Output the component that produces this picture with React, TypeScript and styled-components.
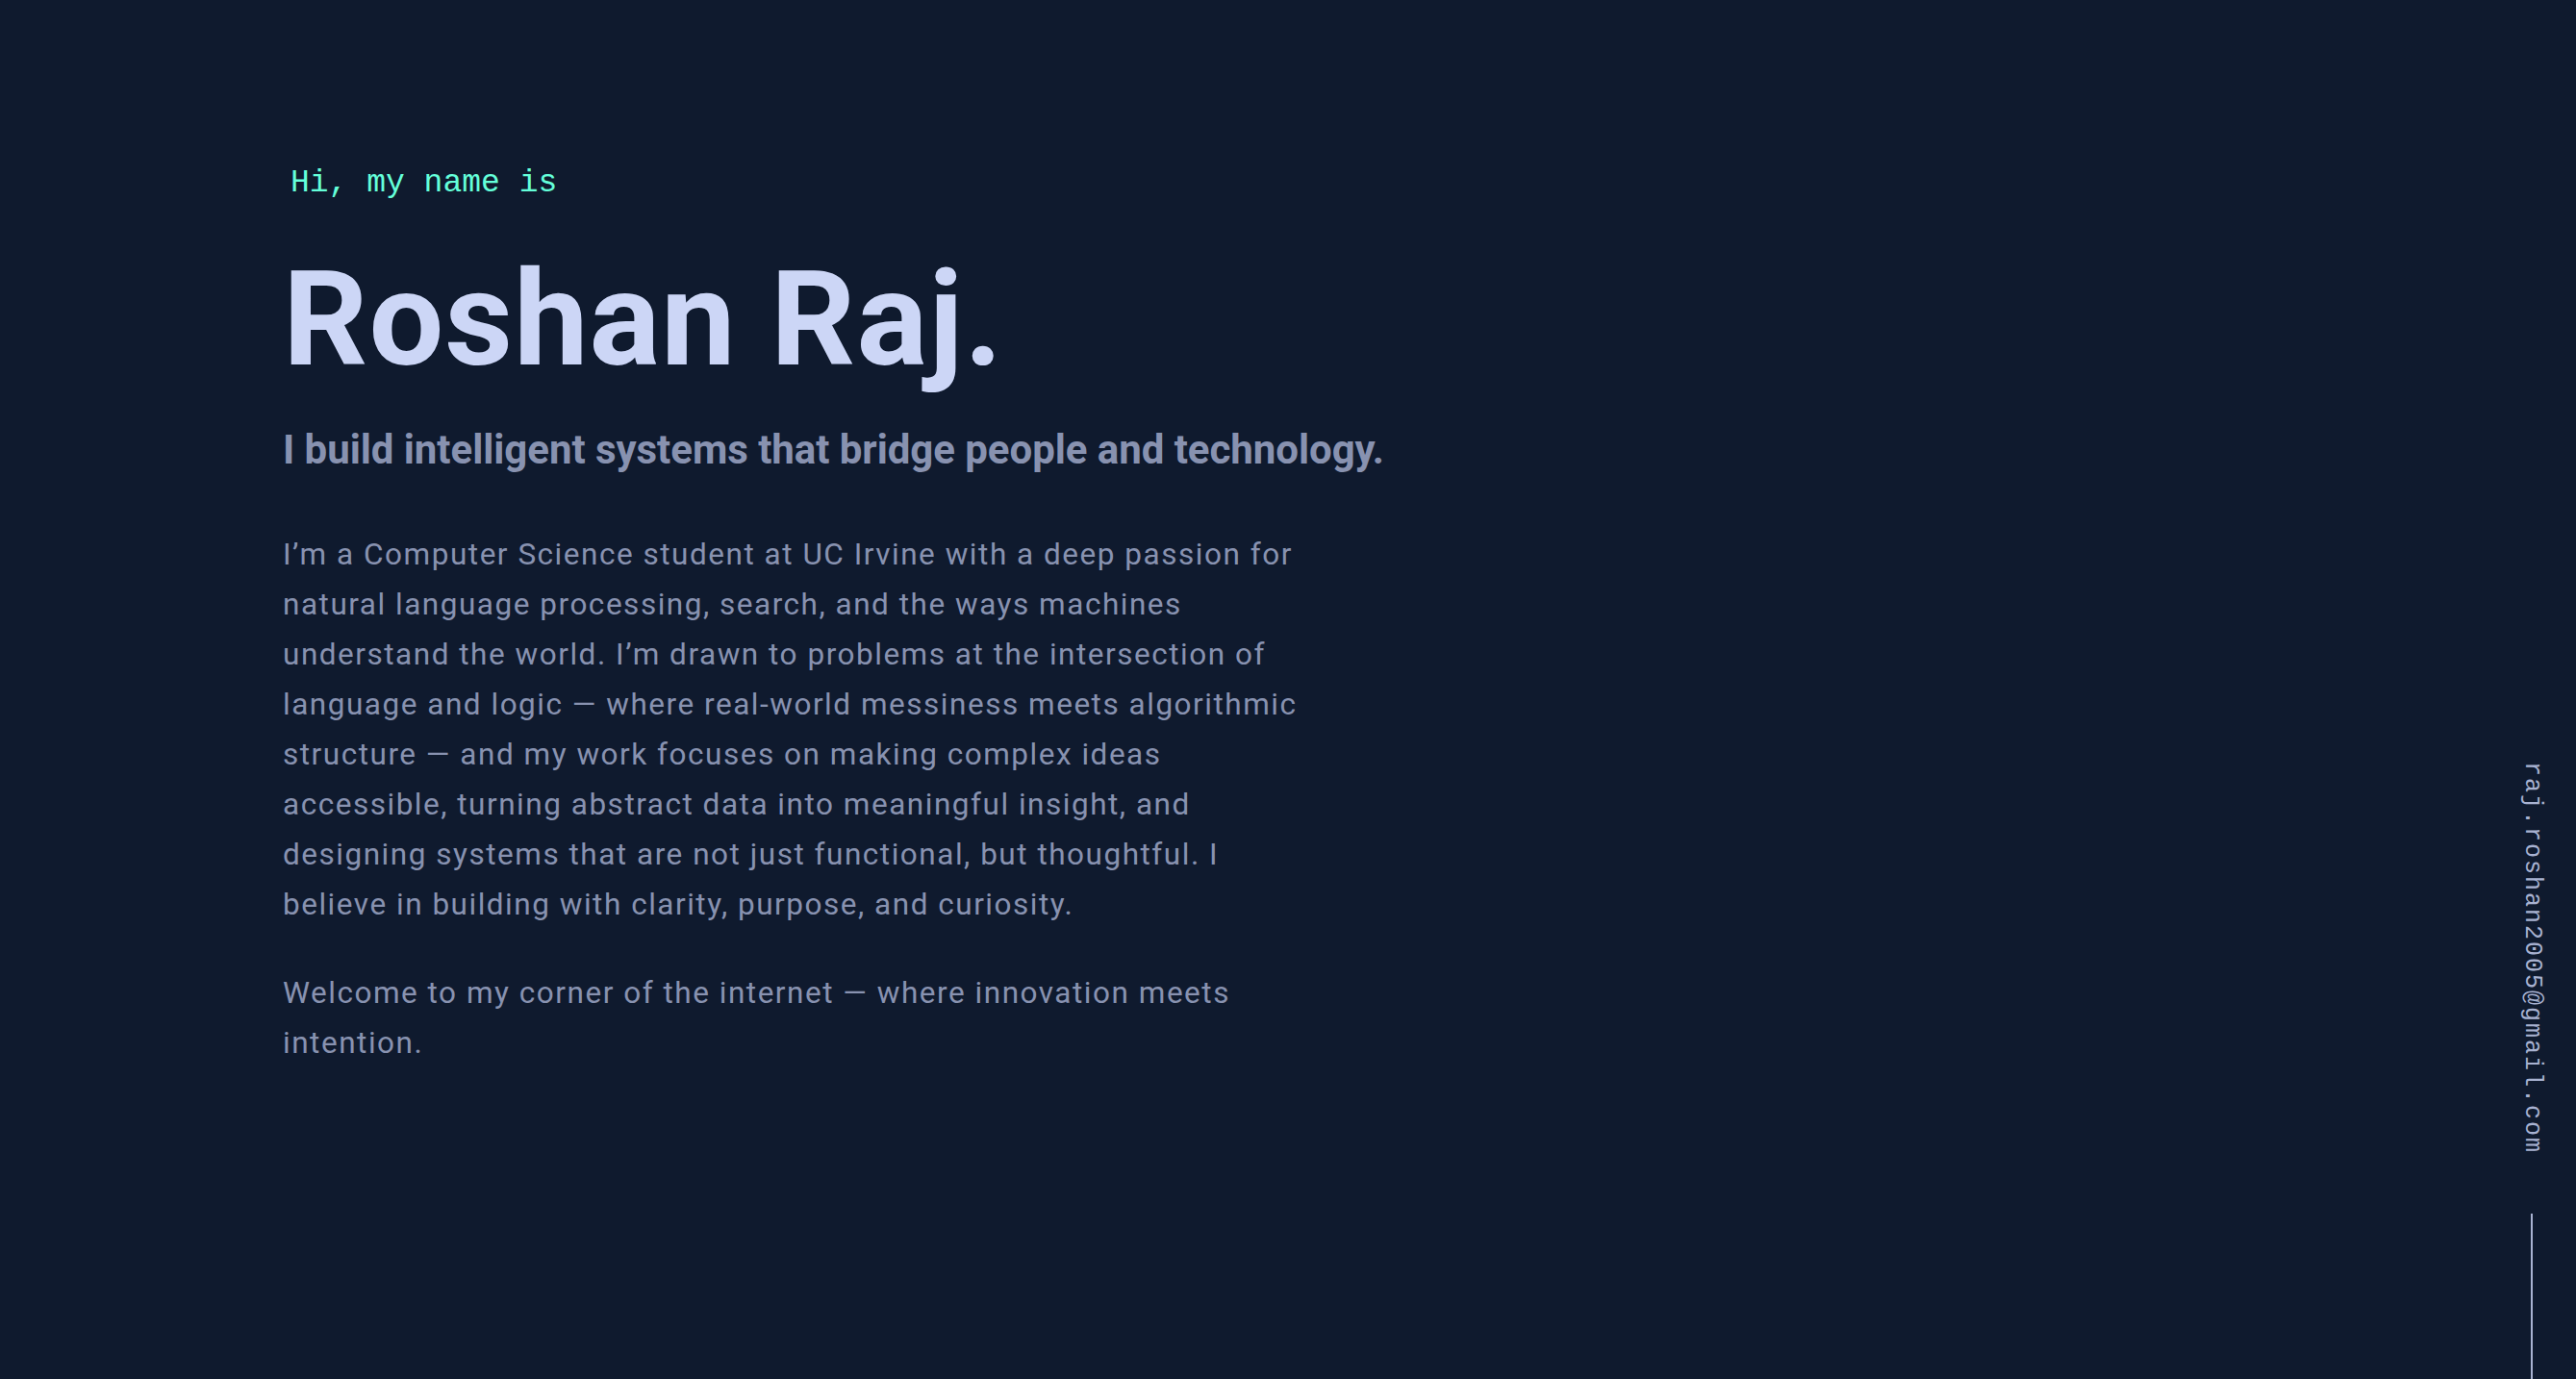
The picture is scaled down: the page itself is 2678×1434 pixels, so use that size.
import React from "react";
import styled, { createGlobalStyle } from "styled-components";

const colors = {
  navy: "#0f1a2e",
  green: "#64ffda",
  lightest: "#ccd6f6",
  slate: "#8892b0",
  lightSlate: "#a8b2d1",
};

const GlobalStyle = createGlobalStyle`
  html, body {
    margin: 0;
    padding: 0;
    background: ${colors.navy};
  }
  body {
    font-family: Roboto, "Liberation Sans", sans-serif;
    -webkit-font-smoothing: antialiased;
  }
  * { box-sizing: border-box; }
`;

const Page = styled.div`
  display: flex;
  height: 100vh;
  width: 100vw;
  overflow: hidden;
  background: ${colors.navy};
`;

const Main = styled.main`
  flex: 1;
  padding: 174px 0 0 294px;
`;

const Hero = styled.section`
  display: flex;
  flex-direction: column;
  align-items: flex-start;
`;

const Greeting = styled.h1`
  margin: 0 0 50px 8px;
  font-family: "Liberation Mono", monospace;
  font-weight: 400;
  font-size: 33px;
  line-height: 33px;
  color: ${colors.green};
`;

const Name = styled.h2`
  margin: 0;
  font-family: Roboto, "Liberation Sans", sans-serif;
  font-weight: 700;
  font-size: 138px;
  line-height: 1.1;
  letter-spacing: 1px;
  color: ${colors.lightest};
`;

const Tagline = styled.h3`
  margin: 36px 0 0 0;
  font-family: Roboto, "Liberation Sans", sans-serif;
  font-weight: 700;
  font-size: 42px;
  line-height: 1.1;
  letter-spacing: -0.05px;
  color: ${colors.slate};
`;

const Paragraph = styled.p<{ $gap: number }>`
  margin: ${(p) => p.$gap}px 0 0 0;
  max-width: 1200px;
  font-family: Roboto, "Liberation Sans", sans-serif;
  font-weight: 400;
  font-size: 31.5px;
  line-height: 52px;
  letter-spacing: 1.52px;
  color: ${colors.slate};
`;

const Side = styled.aside`
  width: 92px;
  display: flex;
  flex-direction: column;
  align-items: center;
  justify-content: flex-end;
`;

const Email = styled.span`
  writing-mode: vertical-rl;
  font-family: "Liberation Mono", monospace;
  font-size: 25px;
  line-height: 25px;
  letter-spacing: 2px;
  color: ${colors.lightSlate};
  margin-bottom: 62px;
`;

const Rule = styled.div`
  width: 2px;
  height: 172px;
  background: ${colors.lightSlate};
`;

const para1 = [
  "I’m a Computer Science student at UC Irvine with a deep passion for",
  "natural language processing, search, and the ways machines",
  "understand the world. I’m drawn to problems at the intersection of",
  "language and logic — where real-world messiness meets algorithmic",
  "structure — and my work focuses on making complex ideas",
  "accessible, turning abstract data into meaningful insight, and",
  "designing systems that are not just functional, but thoughtful. I",
  "believe in building with clarity, purpose, and curiosity.",
];

const para2 = [
  "Welcome to my corner of the internet — where innovation meets",
  "intention.",
];

const withBreaks = (lines: string[]) =>
  lines.map((l, i) => (
    <React.Fragment key={i}>
      {l}
      {i < lines.length - 1 && <br />}
    </React.Fragment>
  ));

export default function App() {
  return (
    <>
      <GlobalStyle />
      <Page>
        <Main>
          <Hero>
            <Greeting>Hi, my name is</Greeting>
            <Name>Roshan Raj.</Name>
            <Tagline>I build intelligent systems that bridge people and technology.</Tagline>
            <Paragraph $gap={60}>{withBreaks(para1)}</Paragraph>
            <Paragraph $gap={40}>{withBreaks(para2)}</Paragraph>
          </Hero>
        </Main>
        <Side>
          <Email>raj.roshan2005@gmail.com</Email>
          <Rule />
        </Side>
      </Page>
    </>
  );
}
